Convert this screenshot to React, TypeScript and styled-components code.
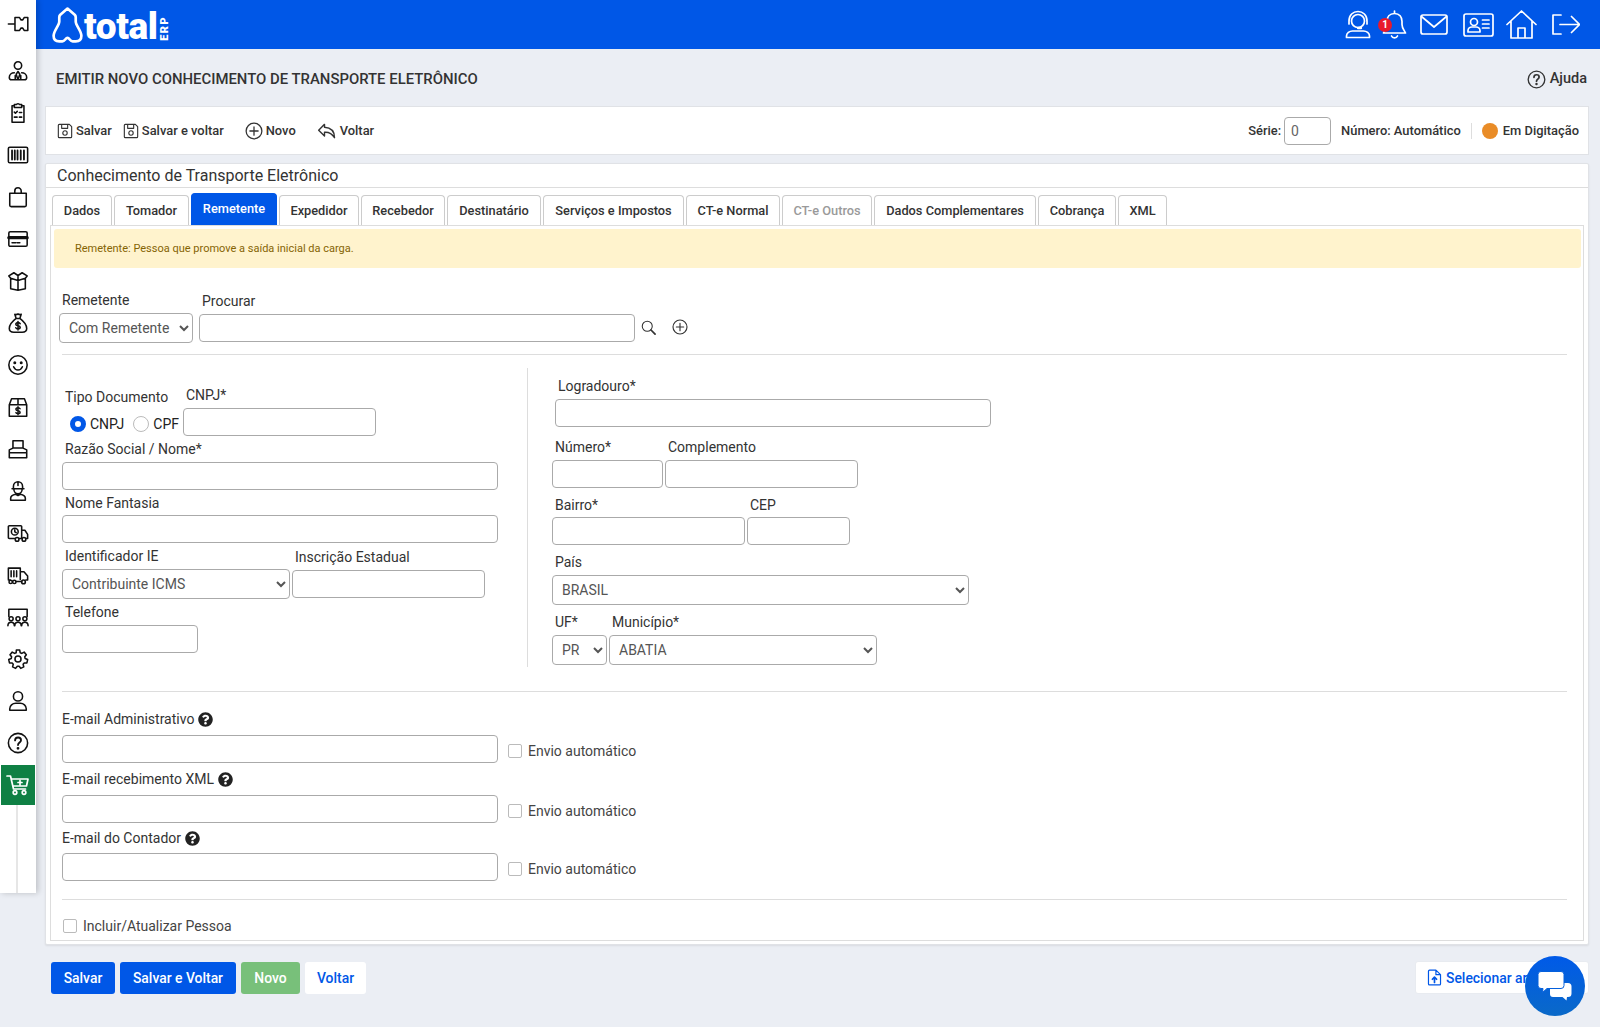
import React from "react";
import styled, { createGlobalStyle } from "styled-components";
import { FaQuestionCircle } from "react-icons/fa";

const Global = createGlobalStyle`
  html, body { margin: 0; padding: 0; background: #ebeef4; font-family: Roboto, "Liberation Sans", sans-serif; }
  * { box-sizing: border-box; }
`;

const BLUE = "#0057e7";

const Page = styled.div`display: flex; width: 1600px; height: 1027px; overflow: hidden; position: relative; background: #ebeef4;`;
const Sidebar = styled.nav`
  width: 36px; height: 893px; flex: none; background: #fff; padding-top: 3px; display: flex; flex-direction: column;
  box-shadow: 2px 0 6px rgba(0,0,0,.2); position: relative; z-index: 2; color: #111;
`;
const SideItem = styled.a<{ $first?: boolean }>`
  height: 42px; flex: none; margin-bottom: ${p => (p.$first ? 5 : 0)}px; display: flex; align-items: center; justify-content: center; color: #111;
`;
const CartItem = styled.a`
  height: 40px; margin: 1px 1px 0 1px; flex: none; display: flex; align-items: center; justify-content: center; color: #fff; background: #0f8044;
`;
const SideLine = styled.div`width: 2px; flex: 1; background: #e6e6e6; margin-left: 16px;`;
const Main = styled.div`flex: 1; min-width: 0; display: flex; flex-direction: column;`;
const TopBar = styled.header`
  height: 49px; flex: none; background: ${BLUE}; display: flex; align-items: center; justify-content: space-between; color: #fff; padding: 0 20px 0 16px;
`;
const Logo = styled.div`display: flex; align-items: center; height: 49px;`;
const LogoWord = styled.span`font: 900 37px/49px Roboto, sans-serif; letter-spacing: -.4px; margin-left: 1px; position: relative; top: 2px;`;
const LogoErp = styled.span`
  writing-mode: vertical-rl; transform: rotate(180deg); font: 900 11px/11px Roboto, sans-serif; letter-spacing: 1.400px; margin-left: 1px; margin-top: 7px;
`;
const TopIcons = styled.div`display: flex; align-items: center; height: 49px;`;
const TopIcon = styled.a<{ $ml: number }>`display: flex; position: relative; margin-left: ${p => p.$ml}px; color: #fff;`;
const Badge = styled.span`
  position: absolute; left: -4px; top: 8px; width: 14px; height: 14px; border-radius: 50%; background: #e8192c; color: #fff;
  font: 700 10px/14px Roboto, sans-serif; text-align: center;
`;
const TitleRow = styled.div`height: 57px; flex: none; display: flex; align-items: center; justify-content: space-between; padding: 3px 13px 0 20px; color: #333;`;
const PageTitle = styled.h1`margin: 0; font: 500 14.9px/20px Roboto, sans-serif; color: #333;`;
const Help = styled.a`display: flex; align-items: center; gap: 4px; font: 500 14.5px/20px Roboto, sans-serif; color: #333;`;
const Content = styled.div`padding: 0 11px 0 9px; display: flex; flex-direction: column;`;
const Toolbar = styled.div`
  height: 49px; background: #fff; border: 1px solid #e0e2e6; display: flex; align-items: center; justify-content: space-between; padding: 0 9px 0 11px;
`;
const ToolLeft = styled.div`display: flex; align-items: center;`;
const ToolBtn = styled.a<{ $ml?: number }>`
  display: flex; align-items: center; gap: 3px; margin-left: ${p => p.$ml ?? 0}px; font: 500 12.9px/20px Roboto, sans-serif; color: #333;
`;
const ToolRight = styled.div`display: flex; align-items: center; font: 500 12.9px/20px Roboto, sans-serif; color: #333;`;
const SerieInput = styled.input`
  width: 47px; height: 28px; margin: 0 10px 0 3px; border: 1px solid #aaa; border-radius: 4px; padding: 0 6px; font: 400 14px Roboto, sans-serif; color: #666;
`;
const VDivider = styled.span`width: 1px; height: 16px; background: #ddd; margin: 0 10px;`;
const Dot = styled.span`width: 16px; height: 16px; border-radius: 50%; background: #e98c27; margin-right: 5px;`;
const Card = styled.section`
  margin-top: 8px; height: 782px; background: #fff; border: 1px solid #e0e2e6; box-shadow: 0 1px 2px rgba(0,0,0,.08); border-radius: 2px; display: flex; flex-direction: column;
`;
const CardTitle = styled.h2`
  margin: 0; height: 24px; flex: none; padding-left: 11px; border-bottom: 1px solid #ddd; font: 400 16px/23px Roboto, sans-serif; color: #333;
`;
const Tabs = styled.div`display: flex; height: 37px; flex: none; align-items: flex-end; padding-left: 6px; gap: 2px;`;
const Tab = styled.a<{ $active?: boolean; $disabled?: boolean; $w: number }>`
  width: ${p => p.$w}px; height: ${p => (p.$active ? 32 : 30)}px; display: block; text-align: center; border-radius: 4px 4px 0 0;
  border: 1px solid ${p => (p.$active ? BLUE : "#ccc")}; border-bottom: 0;
  background: ${p => (p.$active ? BLUE : "#fff")};
  color: ${p => (p.$active ? "#fff" : p.$disabled ? "#9a9a9a" : "#333")};
  font: 500 12.8px/${p => (p.$active ? 29 : 30)}px Roboto, sans-serif;
`;
const Panel = styled.div`margin: 0 4px 3px; border: 1px solid #ddd; flex: 1; display: flex; flex-direction: column; padding: 3px 0 0;`;
const Alert = styled.div`
  margin: 0 2px 0 3px; height: 39px; flex: none; background: #fff3cd; border-radius: 3px; padding-left: 21px; color: #856404; font: 400 11px/39px Roboto, sans-serif;
`;
const FormBody = styled.div`padding: 0 16px 0 11px; display: flex; flex-direction: column;`;
const Row = styled.div<{ $top?: number; $gap?: number; $left?: number }>`
  display: flex; align-items: flex-start; margin-top: ${p => p.$top ?? 0}px; gap: ${p => p.$gap ?? 0}px; margin-left: ${p => p.$left ?? 0}px;
`;
const Field = styled.div<{ $top?: number; $w: number; $left?: number }>`
  display: flex; flex-direction: column; width: ${p => p.$w}px; flex: none; margin-top: ${p => p.$top ?? 0}px; margin-left: ${p => p.$left ?? 0}px;
`;
const Label = styled.label<{ $gap?: number; $plain?: boolean }>`
  height: 20px; font: 400 14px/20px Roboto, sans-serif; color: #333; display: flex; align-items: center; gap: 4px;
  padding-left: ${p => (p.$plain ? 0 : 3)}px; margin-bottom: ${p => p.$gap ?? 3}px; white-space: nowrap;
`;
const TextInput = styled.input`
  width: 100%; height: 28px; border: 1px solid #aaa; border-radius: 4px; background: #fff; padding: 0 8px; font: 400 14px Roboto, sans-serif; color: #555; display: block;
`;
const Select = styled.select`
  width: 100%; height: 30px; border: 1px solid #aaa; border-radius: 4px; background: #fff; padding: 0 5px; font: 400 14px Roboto, sans-serif; color: #555; display: block;
`;
const Rule = styled.hr<{ $top: number; $bottom?: number }>`
  border: 0; border-top: 1px solid #ddd; width: 100%; margin: ${p => p.$top}px 0 ${p => p.$bottom ?? 0}px;
`;
const IconBtn = styled.a<{ $ml: number }>`display: flex; align-self: flex-end; margin: 0 0 8px ${p => p.$ml}px; color: #333;`;
const Columns = styled.div`display: flex;`;
const LeftCol = styled.div`width: 465px; flex: none; padding-top: 17px; padding-bottom: 14px;`;
const RightCol = styled.div`border-left: 1px solid #ddd; padding-left: 24px; padding-top: 8px;`;
const TipoGroup = styled.div`width: 121px; flex: none; padding-top: 2px;`;
const Radios = styled.div`display: flex; align-items: center; height: 24px; margin-top: 5px; padding-left: 8px; font: 400 14px/24px Roboto, sans-serif; color: #222;`;
const Radio = styled.input`
  appearance: none; width: 16px; height: 16px; margin: 0 4px 0 0; border-radius: 50%; border: 1px solid #bbb; background: #fff;
  &:checked { border: 5px solid ${BLUE}; }
  & ~ & { margin-left: 9px; }
`;
const RadioText = styled.span`margin-right: 0;`;
const Check = styled.input<{ $ml: number }>`
  appearance: none; width: 14px; height: 14px; flex: none; margin: 0 6px 0 ${p => p.$ml}px; border: 1px solid #bbb; border-radius: 2px; background: #fff;
`;
const CheckRow = styled.label`display: flex; align-items: center; height: 28px; font: 400 14px/20px Roboto, sans-serif; color: #444; padding-top: 4px;`;
const Include = styled.label`display: flex; align-items: center; height: 20px; margin-top: 16px; font: 400 14px/20px Roboto, sans-serif; color: #444;`;
const Footer = styled.div`display: flex; justify-content: space-between; margin-top: 17px;`;
const FootLeft = styled.div`display: flex; gap: 5px; padding-left: 6px;`;
const Btn = styled.a<{ $w: number; $bg: string; $fg: string }>`
  width: ${p => p.$w}px; height: 32px; border-radius: 3px; background: ${p => p.$bg}; color: ${p => p.$fg}; text-align: center;
  font: 500 13.9px/33px Roboto, sans-serif;
`;
const FileBtn = styled.a`
  width: 174px; height: 33px; margin-top: -1px; background: #fff; border-radius: 3px; border: 1px solid #e8ebf0; color: ${BLUE}; display: flex; align-items: center; gap: 3px; padding-left: 10px;
  font: 500 13.9px/20px Roboto, sans-serif; white-space: nowrap; overflow: hidden;
`;
const Chat = styled.a`
  position: absolute; left: 1525px; top: 956px; width: 60px; height: 60px; border-radius: 50%; z-index: 3;
  background: linear-gradient(180deg, #005ae8, #0a69c8); display: flex; align-items: center; justify-content: center;
`;
const Svg = styled.svg`fill: none; stroke: currentColor; stroke-width: 1.7; stroke-linecap: round; stroke-linejoin: round; display: block; flex: none;`;

const V24 = ({ s = 22, children, sw }: { s?: number; children: React.ReactNode; sw?: number }) => (
  <Svg width={s} height={s} viewBox="0 0 24 24" strokeWidth={sw} aria-hidden="true">{children}</Svg>
);
const Dollar = ({ x, y, k = 1 }: { x: number; y: number; k?: number }) => (
  <g transform={`translate(${x} ${y}) scale(${k})`}>
    <path d="M2.4 -2.2C2 -3.2 1 -3.4 0 -3.4C-1.4 -3.4 -2.4 -2.7 -2.4 -1.7C-2.4 -.6 -1.2 -.2 0 0C1.2 .2 2.4 .7 2.4 1.7C2.4 2.8 1.4 3.4 0 3.4C-1 3.4 -2 3.1 -2.4 2.2M0 -4.6V4.6" />
  </g>
);

const sideIcons: React.ReactNode[] = [
  <V24><path d="M1.500 12H8.700M8.700 5h5l1.500 2.500h2L18.700 5h4v14h-4l-1.500-2.500h-2L13.700 19h-5z" /></V24>,
  <V24><circle cx="12" cy="6" r="4" /><path d="M8 14c-3 0-5.500 2-5.500 5 0 1.500 1 2.500 2.500 2.500h14c1.500 0 2.500-1 2.500-2.500 0-3-2.500-5-5.500-5M12 12.500l-2 3 2 6 2-6z" /><path d="M9 21V17M15 21V17" /></V24>,
  <V24><path d="M8 4H5.500v18h13V4H16M8 2.800h2.500C10.500 1.500 13.500 1.500 13.500 2.800H16V6H8zM8 11l1.200 1.200 2-2M8 16.500h3M13.500 11.500H16M13.500 16.500H16" /></V24>,
  <V24><rect x="1.500" y="3.500" width="21" height="17" rx="1.500" /><path d="M5.500 7v10M8.500 7v10M11.500 7v10M15 7v10M18.500 7v10" strokeWidth="2" /></V24>,
  <V24><path d="M3 8h18v13a1.500 1.500 0 0 1-1.500 1.500h-15A1.500 1.500 0 0 1 3 21zM8.500 8V5.500a3.500 3.500 0 0 1 7 0V8" /></V24>,
  <V24><rect x="2" y="4" width="20" height="16" rx="1.500" /><path d="M2 10.500h20" strokeWidth="3.500" /><path d="M5.500 16h4M11 16h3" /></V24>,
  <V24><path d="M2 6.500 7.500 3 12 6l4.500-3L22 6.500l-2 2.500v11.500L12 22l-8-1.500V9zM4 9l8 2.500L20 9M12 6v16" /></V24>,
  <V24><path d="M8.500 2.500 10 7h4l1.500-4.500c-1.500.8-2.500.3-3.500-.3-1 .6-2 1.100-3.500.3zM10 7C6 10 2.500 14.500 2.500 18c0 3 2.500 4 5 4h9c2.500 0 5-1 5-4 0-3.500-3.500-8-7.500-11" /><Dollar x={12} y={15} k={1} /></V24>,
  <V24><circle cx="12" cy="12" r="10" /><path d="M7.200 14c1 2.500 2.800 3.500 4.800 3.500s3.800-1 4.800-3.500" /><circle cx="8.500" cy="9.500" r=".8" fill="currentColor" /><circle cx="15.500" cy="9.500" r=".8" fill="currentColor" /></V24>,
  <V24><path d="M2.500 9.500 5 3h14l2.500 6.500V22h-19zM2.500 9.500h19M12 3v6.500" /><Dollar x={12} y={16} k={.95} /></V24>,
  <V24><path d="M6.500 11V3h11v8M2.500 21.500V13l4-2h11l4 2v8.500zM2.500 16h19" /></V24>,
  <V24><path d="M7 9.500V7a5 5 0 0 1 10 0v2.500M5.500 9.500h13M7.500 10c0 3 2 5 4.500 5s4.500-2 4.500-5M12 2v4M4 22v-2c0-2.500 2.500-4 5.500-4.500L12 17l2.500-1.500c3 .5 5.500 2 5.500 4.500v2z" /></V24>,
  <V24 sw={1.5}><path d="M9 18H2.500a1 1 0 0 1-1-1V5a1 1 0 0 1 1-1H15a1 1 0 0 1 1 1v13h-3M16 9h3.500l3 4.500V18h-2M16 18h.500" /><circle cx="8.500" cy="10.500" r="3.700" /><path d="M8.500 8.500v2.200l1.500 1" /><circle cx="11" cy="19" r="2" /><circle cx="18.500" cy="19" r="2" /></V24>,
  <V24 sw={1.5}><path d="M1.500 17V4.500h13V17M14.500 8.500h4l4 4.500v4.500h-2M1.500 17.500h2M4.500 7.500V14M7.500 7.500V14M10.500 7.500V14" /><circle cx="4" cy="19.500" r="1.800" /><circle cx="8" cy="19.500" r="1.800" /><circle cx="18" cy="19.500" r="2" /><path d="M10 19h6" /></V24>,
  <V24 sw={1.5}><path d="M2 11.500V3.500h20v8" /><circle cx="4.500" cy="14" r="2.200" /><circle cx="12" cy="14" r="2.200" /><circle cx="19.500" cy="14" r="2.200" /><path d="M1 21.500c0-2.500 1.500-3.800 3.500-3.800S8 19 8 21.500M8.500 21.500c0-2.500 1.500-3.800 3.500-3.800s3.500 1.300 3.500 3.800M16 21.500c0-2.500 1.500-3.800 3.500-3.800s3.500 1.300 3.500 3.800" /></V24>,
  <V24><circle cx="12" cy="12" r="3.300" /><path d="M10.200 2.200h3.600l.6 2.900 1.700.8 2.600-1.400 2.400 2.800-1.700 2.300.4 1.900 2.700 1.100-.8 3.600-2.900.1-1.200 1.500.7 2.800-3.300 1.600-1.800-2.300h-1.900l-1.900 2.300-3.300-1.600.7-2.800-1.200-1.500-2.900-.1-.8-3.600 2.700-1.100.4-1.900-1.700-2.300 2.400-2.800 2.600 1.400 1.700-.8z" /></V24>,
  <V24><circle cx="12" cy="7" r="5" /><path d="M3 22v-1.500C3 17 6 14.500 9.500 14.500h5c3.500 0 6.500 2.500 6.500 6V22z" /></V24>,
  <V24><circle cx="12" cy="12" r="10.500" /><path d="M8.800 9.200c0-2 1.500-3.200 3.300-3.200s3.200 1.200 3.200 2.900c0 2.600-3.300 2.600-3.300 5.300" strokeWidth="2" /><circle cx="12" cy="17.800" r=".7" fill="currentColor" /></V24>,
];

const tabs: [string, number, boolean?][] = [
  ["Dados", 60], ["Tomador", 75], ["Remetente", 86], ["Expedidor", 80], ["Recebedor", 84], ["Destinatário", 94], ["Serviços e Impostos", 141],
  ["CT-e Normal", 94], ["CT-e Outros", 90, true], ["Dados Complementares", 162], ["Cobrança", 78], ["XML", 49],
];

const Help14 = () => <FaQuestionCircle size={15} color="#222" />;
const SaveIcon = () => (
  <V24 s={16} sw={1.9}><path d="M2 3.500A1.500 1.500 0 0 1 3.500 2h15L22 5.500v15a1.500 1.500 0 0 1-1.500 1.500h-17A1.500 1.500 0 0 1 2 20.500zM7 2v6h9V2" /><circle cx="12" cy="15" r="3.300" /></V24>
);

export default function App() {
  return (
    <Page>
      <Global />
      <Sidebar>
        {sideIcons.map((ic, i) => <SideItem key={i} $first={i === 0}>{ic}</SideItem>)}
        <CartItem>
          <V24 s={24}><path d="M1 3h3.500l3 13h12M6 6h16l-1.500 7H7.500M14 7.500v4M12 9.500h4" /><circle cx="9" cy="19.500" r="1.800" /><circle cx="18" cy="19.500" r="1.800" /></V24>
        </CartItem>
        <SideLine />
      </Sidebar>
      <Main>
        <TopBar>
          <Logo>
            <svg width="31" height="36" viewBox="0 0 30 35" fill="none" stroke="#fff" strokeWidth="2.600" strokeLinejoin="round" aria-hidden="true">
              <path d="M15 1.500L8 7.500Q7 8.500 7 10V14C7 18 1.500 23 1.500 28C1.500 32 4 33.500 7 33.500H10C12.500 33.500 13 30 15 30C17 30 17.500 33.500 20 33.500H23C26 33.500 28.500 32 28.500 28C28.500 23 23 18 23 14V10Q23 8.500 22 7.500Z" />
            </svg>
            <LogoWord>total</LogoWord>
            <LogoErp>ERP</LogoErp>
          </Logo>
          <TopIcons>
            <TopIcon $ml={0}>
              <Svg width={26} height={29} viewBox="0 0 26 29" strokeWidth={1.600}>
                <path d="M4 11C4 5 8 1.500 13 1.500S22 5 22 11M4 11v3M22 11v3" /><circle cx="13" cy="11" r="6.500" /><path d="M13 18h3" strokeWidth="2.400" /><path d="M1.500 27.500v-1.500c0-3 3-5 6-5h11c3 0 6 2 6 5v1.500z" />
              </Svg>
            </TopIcon>
            <TopIcon $ml={11}>
              <Svg width={25} height={29} viewBox="0 0 25 29" strokeWidth={1.600}>
                <path d="M12.500 1v2.500M12.500 3.500c-5 0-7.500 3.500-7.500 8v3c0 4-2.500 6-3.500 8.500h22c-1-2.500-3.500-4.500-3.500-8.500v-3c0-4.500-2.500-8-7.500-8zM9.500 26c1 2.500 5 2.500 6 0" />
              </Svg>
              <Badge>1</Badge>
            </TopIcon>
            <TopIcon $ml={13}>
              <Svg width={28} height={21} viewBox="0 0 28 21" strokeWidth={1.600}>
                <rect x="1" y="1" width="26" height="19" rx="2" /><path d="M1.500 2.500 14 13 26.500 2.500" />
              </Svg>
            </TopIcon>
            <TopIcon $ml={15}>
              <Svg width={31} height={24} viewBox="0 0 31 24" strokeWidth={1.600}>
                <rect x="1" y="1" width="29" height="22" rx="2" /><circle cx="11" cy="9" r="3.500" /><path d="M5 19v-1.500c0-2 2-3.500 4-3.500h4c2 0 4 1.500 4 3.500V19zM19.500 7H26M19.500 11H26M19.500 15H26" />
              </Svg>
            </TopIcon>
            <TopIcon $ml={12}>
              <Svg width={31} height={29} viewBox="0 0 31 29" strokeWidth={1.600}>
                <path d="M1 14.500 15.500 1 30 14.500M5 11v17h21V11M12 28v-10h7v10" />
              </Svg>
            </TopIcon>
            <TopIcon $ml={15}>
              <Svg width={28} height={21} viewBox="0 0 28 21" strokeWidth={1.600}>
                <path d="M9 1H1v19h8M8 10.500h19M19.500 2.500l8 8-8 8" />
              </Svg>
            </TopIcon>
          </TopIcons>
        </TopBar>
        <TitleRow>
          <PageTitle>EMITIR NOVO CONHECIMENTO DE TRANSPORTE ELETRÔNICO</PageTitle>
          <Help>
            <V24 s={19} sw={2}><circle cx="12" cy="12" r="10.500" /><path d="M8.800 9.200c0-2 1.500-3.200 3.300-3.200s3.200 1.200 3.200 2.900c0 2.600-3.300 2.600-3.300 5.300" strokeWidth="2.200" /><circle cx="12" cy="17.800" r=".7" fill="currentColor" /></V24>
            Ajuda
          </Help>
        </TitleRow>
        <Content>
          <Toolbar>
            <ToolLeft>
              <ToolBtn><SaveIcon />Salvar</ToolBtn>
              <ToolBtn $ml={11}><SaveIcon />Salvar e voltar</ToolBtn>
              <ToolBtn $ml={21}>
                <V24 s={18} sw={1.9}><circle cx="12" cy="12" r="10.500" /><path d="M12 6.500v11M6.500 12h11" /></V24>
                Novo
              </ToolBtn>
              <ToolBtn $ml={21}>
                <V24 s={20} sw={1.8}><path d="M9 4 2 11l7 7v-4.500c6-.5 9 1.500 12 6.500 0-7-4-12-12-12.500z" /></V24>
                Voltar
              </ToolBtn>
            </ToolLeft>
            <ToolRight>
              Série:<SerieInput defaultValue="0" />
              Número: Automático
              <VDivider />
              <Dot />
              Em Digitação
            </ToolRight>
          </Toolbar>
          <Card>
            <CardTitle>Conhecimento de Transporte Eletrônico</CardTitle>
            <Tabs>
              {tabs.map(([t, w, dis]) => <Tab key={t} $w={w} $active={t === "Remetente"} $disabled={dis}>{t}</Tab>)}
            </Tabs>
            <Panel>
              <Alert>Remetente: Pessoa que promove a saída inicial da carga.</Alert>
              <FormBody>
                <Row $top={22} $left={-3}>
                  <Field $w={134}>
                    <Label>Remetente</Label>
                    <Select defaultValue="c"><option value="c">Com Remetente</option></Select>
                  </Field>
                  <Field $w={436} $top={1} $left={6}>
                    <Label>Procurar</Label>
                    <TextInput />
                  </Field>
                  <IconBtn $ml={6}>
                    <V24 s={15} sw={2.200}><circle cx="10" cy="10" r="8" /><path d="m16 16 6.500 6.500" strokeWidth="2.800" /></V24>
                  </IconBtn>
                  <IconBtn $ml={16}>
                    <V24 s={16} sw={2}><circle cx="12" cy="12" r="10.500" /><path d="M12 6.500v11M6.500 12h11" /></V24>
                  </IconBtn>
                </Row>
                <Rule $top={11} $bottom={13} />
                <Columns>
                  <LeftCol>
                    <Row>
                      <TipoGroup>
                        <Label>Tipo Documento</Label>
                        <Radios>
                          <Radio type="radio" name="doc" defaultChecked /><RadioText>CNPJ</RadioText>
                          <Radio type="radio" name="doc" /><RadioText>CPF</RadioText>
                        </Radios>
                      </TipoGroup>
                      <Field $w={193}>
                        <Label>CNPJ*</Label>
                        <TextInput />
                      </Field>
                    </Row>
                    <Field $w={436} $top={3}><Label>Razão Social / Nome*</Label><TextInput /></Field>
                    <Field $w={436} $top={3}><Label $gap={2}>Nome Fantasia</Label><TextInput /></Field>
                    <Row $top={3}>
                      <Field $w={228}><Label $gap={3}>Identificador IE</Label><Select defaultValue="i"><option value="i">Contribuinte ICMS</option></Select></Field>
                      <Field $w={193} $top={1} $left={2}><Label $gap={3}>Inscrição Estadual</Label><TextInput /></Field>
                    </Row>
                    <Field $w={136} $top={3}><Label $gap={3}>Telefone</Label><TextInput /></Field>
                  </LeftCol>
                  <RightCol>
                    <Field $w={436} $left={3}><Label>Logradouro*</Label><TextInput /></Field>
                    <Row $top={10} $gap={2}>
                      <Field $w={111}><Label>Número*</Label><TextInput /></Field>
                      <Field $w={193}><Label>Complemento</Label><TextInput /></Field>
                    </Row>
                    <Row $top={7} $gap={2}>
                      <Field $w={193}><Label $gap={2}>Bairro*</Label><TextInput /></Field>
                      <Field $w={103}><Label $gap={2}>CEP</Label><TextInput /></Field>
                    </Row>
                    <Field $w={417} $top={7}><Label>País</Label><Select defaultValue="b"><option value="b">BRASIL</option></Select></Field>
                    <Row $top={7} $gap={2}>
                      <Field $w={55}><Label $gap={3}>UF*</Label><Select defaultValue="pr"><option value="pr">PR</option></Select></Field>
                      <Field $w={268}><Label $gap={3}>Município*</Label><Select defaultValue="a"><option value="a">ABATIA</option></Select></Field>
                    </Row>
                  </RightCol>
                </Columns>
                <Rule $top={24} />
                <Field $w={900} $top={17}>
                  <Label $plain $gap={6}>E-mail Administrativo <Help14 /></Label>
                  <Row>
                    <Field $w={436}><TextInput /></Field>
                    <CheckRow><Check type="checkbox" $ml={10} />Envio automático</CheckRow>
                  </Row>
                </Field>
                <Field $w={900} $top={6}>
                  <Label $plain $gap={6}>E-mail recebimento XML <Help14 /></Label>
                  <Row>
                    <Field $w={436}><TextInput /></Field>
                    <CheckRow><Check type="checkbox" $ml={10} />Envio automático</CheckRow>
                  </Row>
                </Field>
                <Field $w={900} $top={5}>
                  <Label $plain $gap={5}>E-mail do Contador <Help14 /></Label>
                  <Row>
                    <Field $w={436}><TextInput /></Field>
                    <CheckRow><Check type="checkbox" $ml={10} />Envio automático</CheckRow>
                  </Row>
                </Field>
                <Rule $top={18} />
                <Include><Check type="checkbox" $ml={1} />Incluir/Atualizar Pessoa</Include>
              </FormBody>
            </Panel>
          </Card>
          <Footer>
            <FootLeft>
              <Btn $w={64} $bg={BLUE} $fg="#fff">Salvar</Btn>
              <Btn $w={116} $bg={BLUE} $fg="#fff">Salvar e Voltar</Btn>
              <Btn $w={59} $bg="#78c07a" $fg="#fff">Novo</Btn>
              <Btn $w={61} $bg="#fff" $fg={BLUE}>Voltar</Btn>
            </FootLeft>
            <FileBtn>
              <V24 s={17}><path d="M14 1.500H5a1.500 1.500 0 0 0-1.500 1.500v18A1.500 1.500 0 0 0 5 22.500h14a1.500 1.500 0 0 0 1.500-1.500V8zM14 1.500V8h6.500" /><path d="M12 19v-7M9 14.500l3-3 3 3" strokeWidth="2.400" /></V24>
              Selecionar arquivo
            </FileBtn>
          </Footer>
        </Content>
      </Main>
      <Chat>
        <svg width="34" height="30" viewBox="0 0 34 30" aria-hidden="true">
          <path d="M12 12h18a3.500 3.500 0 0 1 3.500 3.500v7A3.500 3.500 0 0 1 30 26h-1l-.5 3.500-4-3.500H15a3 3 0 0 1-3-3z" fill="#fff" />
          <path d="M3 .5h20A3 3 0 0 1 26 3.500v11a3 3 0 0 1-3 3H9l-4.500 4 .5-4H3a3 3 0 0 1-3-3v-11A3 3 0 0 1 3 .5z" fill="#fff" stroke="#0560dc" strokeWidth="1" />
        </svg>
      </Chat>
    </Page>
  );
}
